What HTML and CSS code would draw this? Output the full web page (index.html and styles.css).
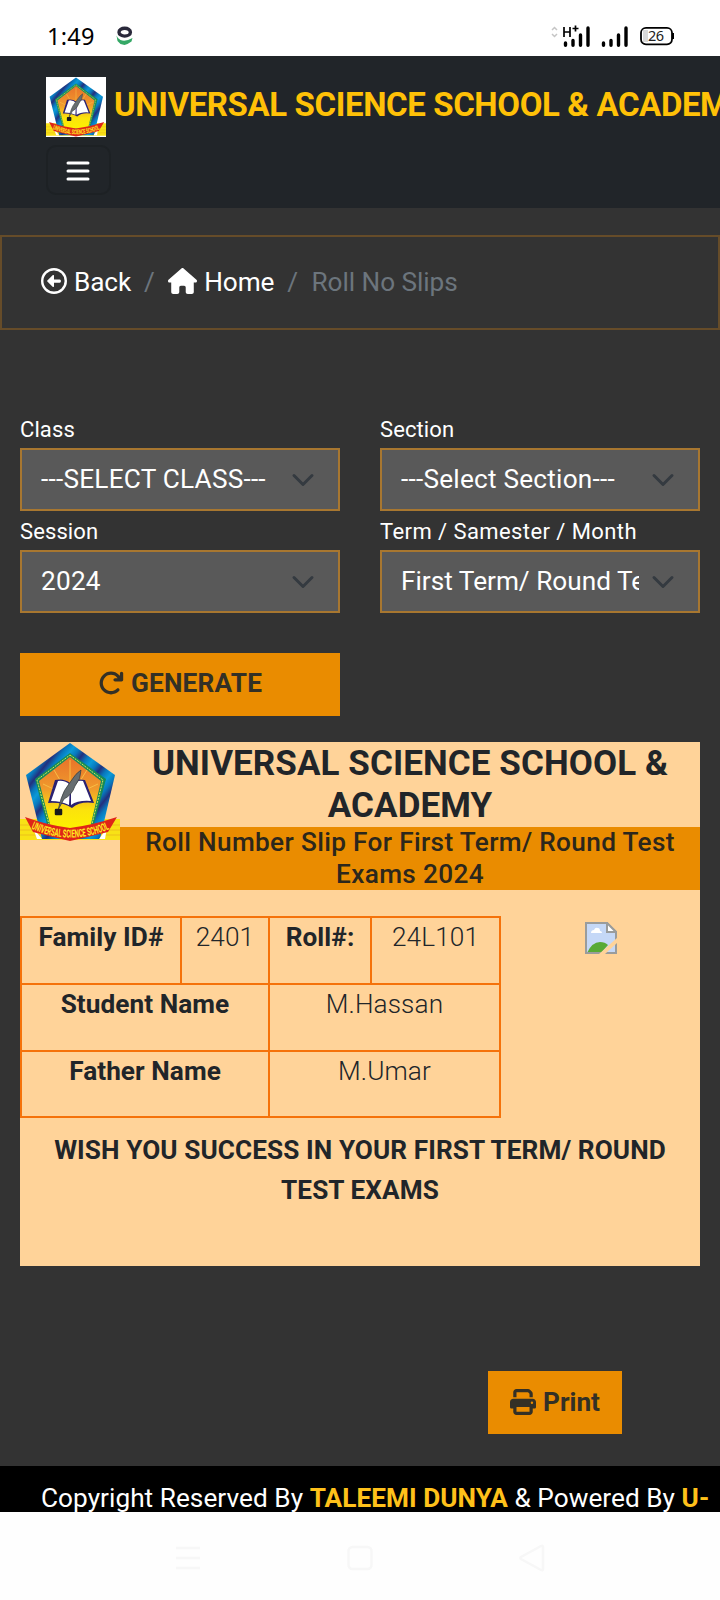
FILE: index.html
```html
<!DOCTYPE html>
<html lang="en">
<head>
<meta charset="utf-8">
<title>Roll No Slips</title>
<link rel="stylesheet" href="styles.css">
</head>
<body>
<svg class="defs" width="0" height="0">
  <defs>
    <linearGradient id="sun" x1="0" y1="0" x2="0" y2="1"><stop offset="0" stop-color="#e8722a"/><stop offset=".45" stop-color="#f09a2c"/><stop offset=".75" stop-color="#fbe30c"/><stop offset="1" stop-color="#fdf000"/></linearGradient>
    <linearGradient id="rim" x1="0" y1="0" x2="9" y2="7" gradientUnits="userSpaceOnUse" spreadMethod="reflect"><stop offset="0" stop-color="#0a9ad8"/><stop offset=".5" stop-color="#0878bd"/><stop offset="1" stop-color="#22307e"/></linearGradient>
    <symbol id="crest" viewBox="0 0 100 100">
      <path d="M0 77h100v21H0z" fill="#f8e216"/>
      <path d="M0 83h100M0 88h100M0 93h100" stroke="#e9b91c" stroke-width=".8"/>
      <path d="M50 1 95 33 80 97H22L6 33z" fill="url(#rim)"/>
      <path d="M50 11 86 37 73 86H28L15 37z" fill="#178a56"/>
      <path d="M50 13 83 38 71 86H30L17 38z" fill="none" stroke="#d9e85a" stroke-width="1" stroke-dasharray="2 1"/>
      <path d="M50 15 81 39 70 86H31L19 39z" fill="url(#sun)"/>
      <path d="M50 55 50 18M50 55 34 28M50 55 67 28M50 55 23 42M50 55 78 42" stroke="#f8bd45" stroke-width="1"/>
      <path d="M35 38q9-2 15 3 5-5 15-3l9 23q-14-2-22 5-9-6-24-5z" fill="#2b2172"/>
      <path d="M38 39q7-1 12 4l-1 20q-8-4-18-4zM51 43q5-5 12-4l8 20q-13-1-20 4z" fill="#fff"/>
      <path d="M61 28q-5 3-10 11-8 10-10 18l-3 11 6-11q8-4 11-13 6-7 6-16z" fill="#666d70" stroke="#33383a" stroke-width=".7"/>
      <path d="M36 68h5v4h-5z" fill="#18191b" stroke="#18191b" stroke-width="2.500" stroke-linejoin="round"/>
      <path d="M13 86 22 97H17zM87 86 79 97h6z" fill="#fff"/>
      <path d="M5 75q22 8 45 11 23-3 47-11l-9 15q-20 5-38 9-18-4-37-9z" fill="#df2518"/>
      <path id="ribbon" d="M11 86.500q39 18 80 0" fill="none"/>
      <text class="crest-text"><textPath href="#ribbon" textLength="81" lengthAdjust="spacingAndGlyphs">UNIVERSAL SCIENCE SCHOOL</textPath></text>
    </symbol>
  </defs>
</svg>

<div class="statusbar">
  <span class="clock">1:49</span>
  <svg class="app-dot" viewBox="0 0 17 19"><path d="M.5 9.500q1 3 4 4.500 5 2 12-2l-1 3.500-4 2.500-3 1-4-1-3-3z" fill="#35a866"/><ellipse cx="8.700" cy="6.200" rx="5.700" ry="3.900" fill="#fff" stroke="#29283a" stroke-width="3.400"/></svg>
  <svg class="signals" viewBox="0 0 124 24">
    <path d="M2 5l2.500-2.500L7 5M2 9l2.500 2.500L7 9" fill="none" stroke="#c5c5c5" stroke-width="1.500"/>
    <path d="M14 2v10M20 2v10M14 7h6M22.500 3.500h6M25.500.5v6" fill="none" stroke="#000" stroke-width="1.700"/>
    <g stroke="#000" stroke-width="3.400" stroke-linecap="round"><path d="M15.500 18v2.300M23 15.500v4.800M30.500 10v10.300M38 3v17.300M53.500 18v2.300M61 15.500v4.800M68.500 10v10.300M76 3v17.300"/></g>
    <rect x="93" y="5" width="5" height="12" fill="#d8d8d8"/>
    <rect x="91" y="2.800" width="31" height="16.500" rx="5" fill="none" stroke="#000" stroke-width="1.800"/>
    <path d="M123 8v6" stroke="#000" stroke-width="2"/>
    <text x="98" y="16.200" class="battery">26</text>
  </svg>
</div>

<nav class="navbar">
  <div class="brand"><svg class="brand-logo"><use href="#crest"/></svg><span>UNIVERSAL SCIENCE SCHOOL &amp; ACADEMY</span></div>
  <button class="toggler" aria-label="Menu"><svg viewBox="0 0 24 22"><path d="M2 3h20M2 11h20M2 19h20" stroke="#fff" stroke-width="3" stroke-linecap="round"/></svg></button>
</nav>

<main>
  <div class="breadcrumb">
    <svg class="ic-back" viewBox="0 0 512 512"><path fill="#fff" d="M48 256a208 208 0 1 1 416 0A208 208 0 1 1 48 256zm464 0A256 256 0 1 0 0 256a256 256 0 1 0 512 0zM124.700 244.700l104-104c4.600-4.600 11.500-5.900 17.400-3.500s9.900 8.300 9.900 14.800v72h112c17.700 0 24 14.300 24 32s-6.300 32-24 32h-112v72c0 6.500-3.900 12.300-9.900 14.800s-12.900 1.100-17.400-3.500l-104-104c-6.200-6.200-6.200-16.400 0-22.600z"/></svg>
    <span class="bc-back">Back</span><span class="slash">/</span>
    <svg class="ic-home" viewBox="0 0 576 512"><path fill="#fff" d="M575.800 255.500c0 18-15 32.100-32 32.100h-32l.7 160.200V472c0 22.100-17.900 40-40 40H392c-22.100 0-40-17.900-40-40v-88c0-17.700-14.300-32-32-32h-64c-17.700 0-32 14.300-32 32v88c0 22.100-17.900 40-40 40h-80c-22.100 0-40-17.900-40-40V287.600H32c-18 0-32-14-32-32.100 0-9 3-17 10-24L266.400 8c7-7 15-8 22-8s15 2 21 7l255.400 224.500c8 7 12 15 11 24z"/></svg>
    <span class="bc-home">Home</span><span class="slash">/</span><span class="current">Roll No Slips</span>
  </div>

  <form class="filters">
    <div class="field"><label>Class</label><div class="select"><span class="dashed">---SELECT CLASS---</span><svg viewBox="0 0 16 16"><path d="m2 5 6 6 6-6"/></svg></div></div>
    <div class="field"><label>Section</label><div class="select"><span class="dashed">---Select Section---</span><svg viewBox="0 0 16 16"><path d="m2 5 6 6 6-6"/></svg></div></div>
    <div class="field"><label>Session</label><div class="select"><span class="dashed">2024</span><svg viewBox="0 0 16 16"><path d="m2 5 6 6 6-6"/></svg></div></div>
    <div class="field"><label class="wide">Term / Samester / Month</label><div class="select"><span>First Term/ Round Test</span><svg viewBox="0 0 16 16"><path d="m2 5 6 6 6-6"/></svg></div></div>
    <button type="button" class="btn generate"><svg viewBox="0 0 512 512"><path d="M386.300 160H336c-17.700 0-32 14.300-32 32s14.300 32 32 32h128c17.700 0 32-14.300 32-32V64c0-17.700-14.300-32-32-32s-32 14.300-32 32v51.200l-17.600-17.600c-87.500-87.500-229.300-87.500-316.800 0s-87.500 229.300 0 316.800 229.300 87.500 316.800 0c12.500-12.500 12.500-32.800 0-45.300s-32.800-12.500-45.300 0c-62.500 62.500-163.800 62.500-226.300 0s-62.500-163.800 0-226.300 163.800-62.500 226.300 0z"/></svg><span>GENERATE</span></button>
  </form>

  <section class="slip">
    <header class="slip-head">
      <svg class="slip-logo"><use href="#crest"/></svg>
      <div class="slip-titles">
        <h1>UNIVERSAL SCIENCE SCHOOL &amp;<br>ACADEMY</h1>
        <h2>Roll Number Slip For First Term/ Round Test<br>Exams 2024</h2>
      </div>
    </header>
    <div class="slip-body">
      <table>
        <colgroup><col class="c1"><col class="c2"><col class="c3"><col class="c4"></colgroup>
        <tr><th>Family ID#</th><td>2401</td><th>Roll#:</th><td>24L101</td></tr>
        <tr><th colspan="2">Student Name</th><td colspan="2">M.Hassan</td></tr>
        <tr class="last"><th colspan="2">Father Name</th><td colspan="2">M.Umar</td></tr>
      </table>
      <svg class="photo" viewBox="0 0 32 32">
        <path d="M1 1h21l9 9v21H1z" fill="#c5d8f7"/>
        <path d="M6 11q0-3 3-3 1-3 4-2 2 0 2 3 2 0 2 2z" fill="#fff"/>
        <path d="M2 31q5-11 13-11 5 0 8 3l-7 8z" fill="#58aa35"/>
        <path d="M1 1h21l9 9v21H1z" fill="none" stroke="#9a9c9c" stroke-width="2"/>
        <path d="M22 1v9h9z" fill="#fff" stroke="#9a9c9c" stroke-width="2"/>
        <path d="M32 16v5L20 32h-6z" fill="#ffd399"/>
      </svg>
    </div>
    <p class="wish">WISH YOU SUCCESS IN YOUR FIRST TERM/ ROUND<br>TEST EXAMS</p>
  </section>

  <button type="button" class="btn print"><svg viewBox="0 0 512 512"><path d="M128 0C92.700 0 64 28.700 64 64v96h64V64h226.700L384 93.300V160h64V93.300c0-17-6.700-33.300-18.700-45.300L400 18.700C388 6.700 371.700 0 354.700 0H128zM384 352v96H128v-96h256zm64 32h32c17.700 0 32-14.300 32-32v-96c0-35.300-28.700-64-64-64H64c-35.300 0-64 28.700-64 64v96c0 17.700 14.300 32 32 32h32v64c0 35.300 28.700 64 64 64h256c35.300 0 64-28.700 64-64v-64zM432 248a24 24 0 1 1 0 48 24 24 0 1 1 0-48z"/></svg><span>Print</span></button>
</main>

<footer class="footer">Copyright Reserved By <b>TALEEMI DUNYA</b> &amp; Powered By <b>U-</b></footer>
<div class="sysnav">
  <svg viewBox="0 0 26 28"><path d="M1 4h24M1 14h24M1 24h24"/></svg>
  <svg viewBox="0 0 26 28"><rect x="1.500" y="3" width="23" height="22" rx="4"/></svg>
  <svg viewBox="0 0 26 28"><path d="M24 3v22q0 2-2 1L2 15q-1-1 0-2L22 2q2-1 2 1z"/></svg>
</div>
</body>
</html>
```
FILE: styles.css
```css
* { box-sizing: border-box; }
body { margin: 0; width: 720px; height: 1600px; overflow: hidden; display: flex; flex-direction: column; background: #333; font-family: Roboto, "Liberation Sans", sans-serif; font-size: 26.2px; line-height: 40px; color: #fff; }
svg { display: block; flex: none; }
button { font: inherit; }
.defs { position: absolute; }
.crest-text { font: 700 11px Roboto, sans-serif; fill: #ffed21; }

.statusbar { height: 56px; flex: none; background: #fff; color: #000; display: flex; padding: 15px 46px 0 47px; }
.clock { font-family: "Noto Sans", sans-serif; font-size: 23.500px; line-height: 42px; letter-spacing: .3px; width: 69px; }
.app-dot { width: 17px; height: 19px; margin-top: 11px; }
.signals { width: 124px; height: 24px; margin: 10px 0 0 auto; }
.battery { font: 400 14.500px "Noto Sans", sans-serif; letter-spacing: -.6px; fill: #222; }

.navbar { height: 152px; flex: none; background: #212529; padding: 21px 0 0 46px; overflow: hidden; }
.brand { display: flex; align-items: flex-start; color: #ffc107; font-weight: 700; font-size: 33px; line-height: 56px; letter-spacing: -.39px; white-space: nowrap; }
.brand span { margin-left: 8px; }
.brand-logo { width: 60px; height: 60px; background: #fff; }
.toggler { display: flex; align-items: center; justify-content: center; width: 65px; height: 50px; margin-top: 8px; padding: 2px 2px 0 0; background: none; border: 2px solid #1d2124; border-radius: 10px; }
.toggler svg { width: 24px; height: 22px; }

main { flex: none; height: 1258px; display: flex; flex-direction: column; }
.breadcrumb { height: 95px; margin-top: 27px; border: 2px solid #664c29; display: flex; padding: 25px 0 0 39px; }
.ic-back { width: 26px; height: 26px; margin-top: 6px; }
.ic-home { width: 29px; height: 26px; margin-top: 6px; }
.bc-back, .bc-home { margin-left: 7px; letter-spacing: -.1px; }
.slash { color: #6c757d; margin: 0 13.500px 0 12.800px; }
.current { color: #6c757d; letter-spacing: -.05px; }

.filters { margin-top: 78px; padding: 0 20px; display: grid; grid-template-columns: 320px 320px; column-gap: 40px; }
.field { height: 102px; }
label { display: block; height: 40px; line-height: 43px; font-size: 22px; letter-spacing: .1px; white-space: nowrap; }
.wide { letter-spacing: .42px; }
.select { height: 63px; border: 2px solid #a87730; background: #595959; display: flex; align-items: center; justify-content: space-between; padding: 0 23px 2px 19px; }
.select span { width: 238px; overflow: hidden; white-space: nowrap; }
.select .dashed { letter-spacing: .23px; }
.select svg { width: 24px; height: 24px; margin-top: 2px; }
.select path { fill: none; stroke: #343a40; stroke-width: 2; stroke-linecap: round; stroke-linejoin: round; }

.btn { display: flex; align-items: center; justify-content: center; height: 63px; border: 0; padding: 0 0 3px; background: #ea8c00; color: #333026; font-weight: 700; }
.btn svg { width: 26px; height: 26px; fill: #333026; }
.btn span { margin-left: 7px; }
.generate { margin-top: 41px; letter-spacing: .2px; }

.slip { width: 680px; height: 524px; margin: 26px 20px 0; background: #ffd399; color: #212529; }
.slip-head { display: flex; height: 148px; }
.slip-logo { width: 100px; height: 100px; }
.slip-titles { width: 580px; text-align: center; white-space: nowrap; }
h1 { margin: 0; height: 85px; padding-top: 1px; font-size: 35px; line-height: 42px; font-weight: 700; letter-spacing: .08px; }
h2 { margin: 0; height: 63px; font-size: 26.200px; line-height: 31.500px; font-weight: 500; letter-spacing: .34px; background: #ea8c00; color: #2c271c; }
.slip-body { display: flex; height: 202px; margin-top: 26px; }
table { width: 481px; height: 201px; table-layout: fixed; border-collapse: collapse; }
.c1 { width: 160px; }
.c2 { width: 88px; }
.c3 { width: 102px; }
.c4 { width: 129px; }
th, td { height: 67px; border: 2px solid #f5720a; padding: 0; vertical-align: top; text-align: center; line-height: 38px; }
th { letter-spacing: .06px; }
td { font-weight: 300; letter-spacing: .1px; }
.last th, .last td { height: 66px; }
.photo { width: 32px; height: 32px; margin: 6px 0 0 84px; }
.wish { margin: 12px 0 0; text-align: center; font-weight: 700; letter-spacing: .08px; white-space: nowrap; }
.print { width: 134px; margin: 105px 0 0 488px; padding-bottom: 2px; }

.footer { height: 46px; flex: none; background: #000; overflow: hidden; white-space: nowrap; padding: 12px 0 0 41px; letter-spacing: .04px; }
.footer b { color: #ffc11a; }
.sysnav { height: 88px; flex: none; background: #fefefe; display: flex; gap: 146px; padding: 32px 0 0 175px; }
.sysnav svg { width: 26px; height: 28px; fill: none; stroke: #f7f7f7; stroke-width: 2.500; }
```
